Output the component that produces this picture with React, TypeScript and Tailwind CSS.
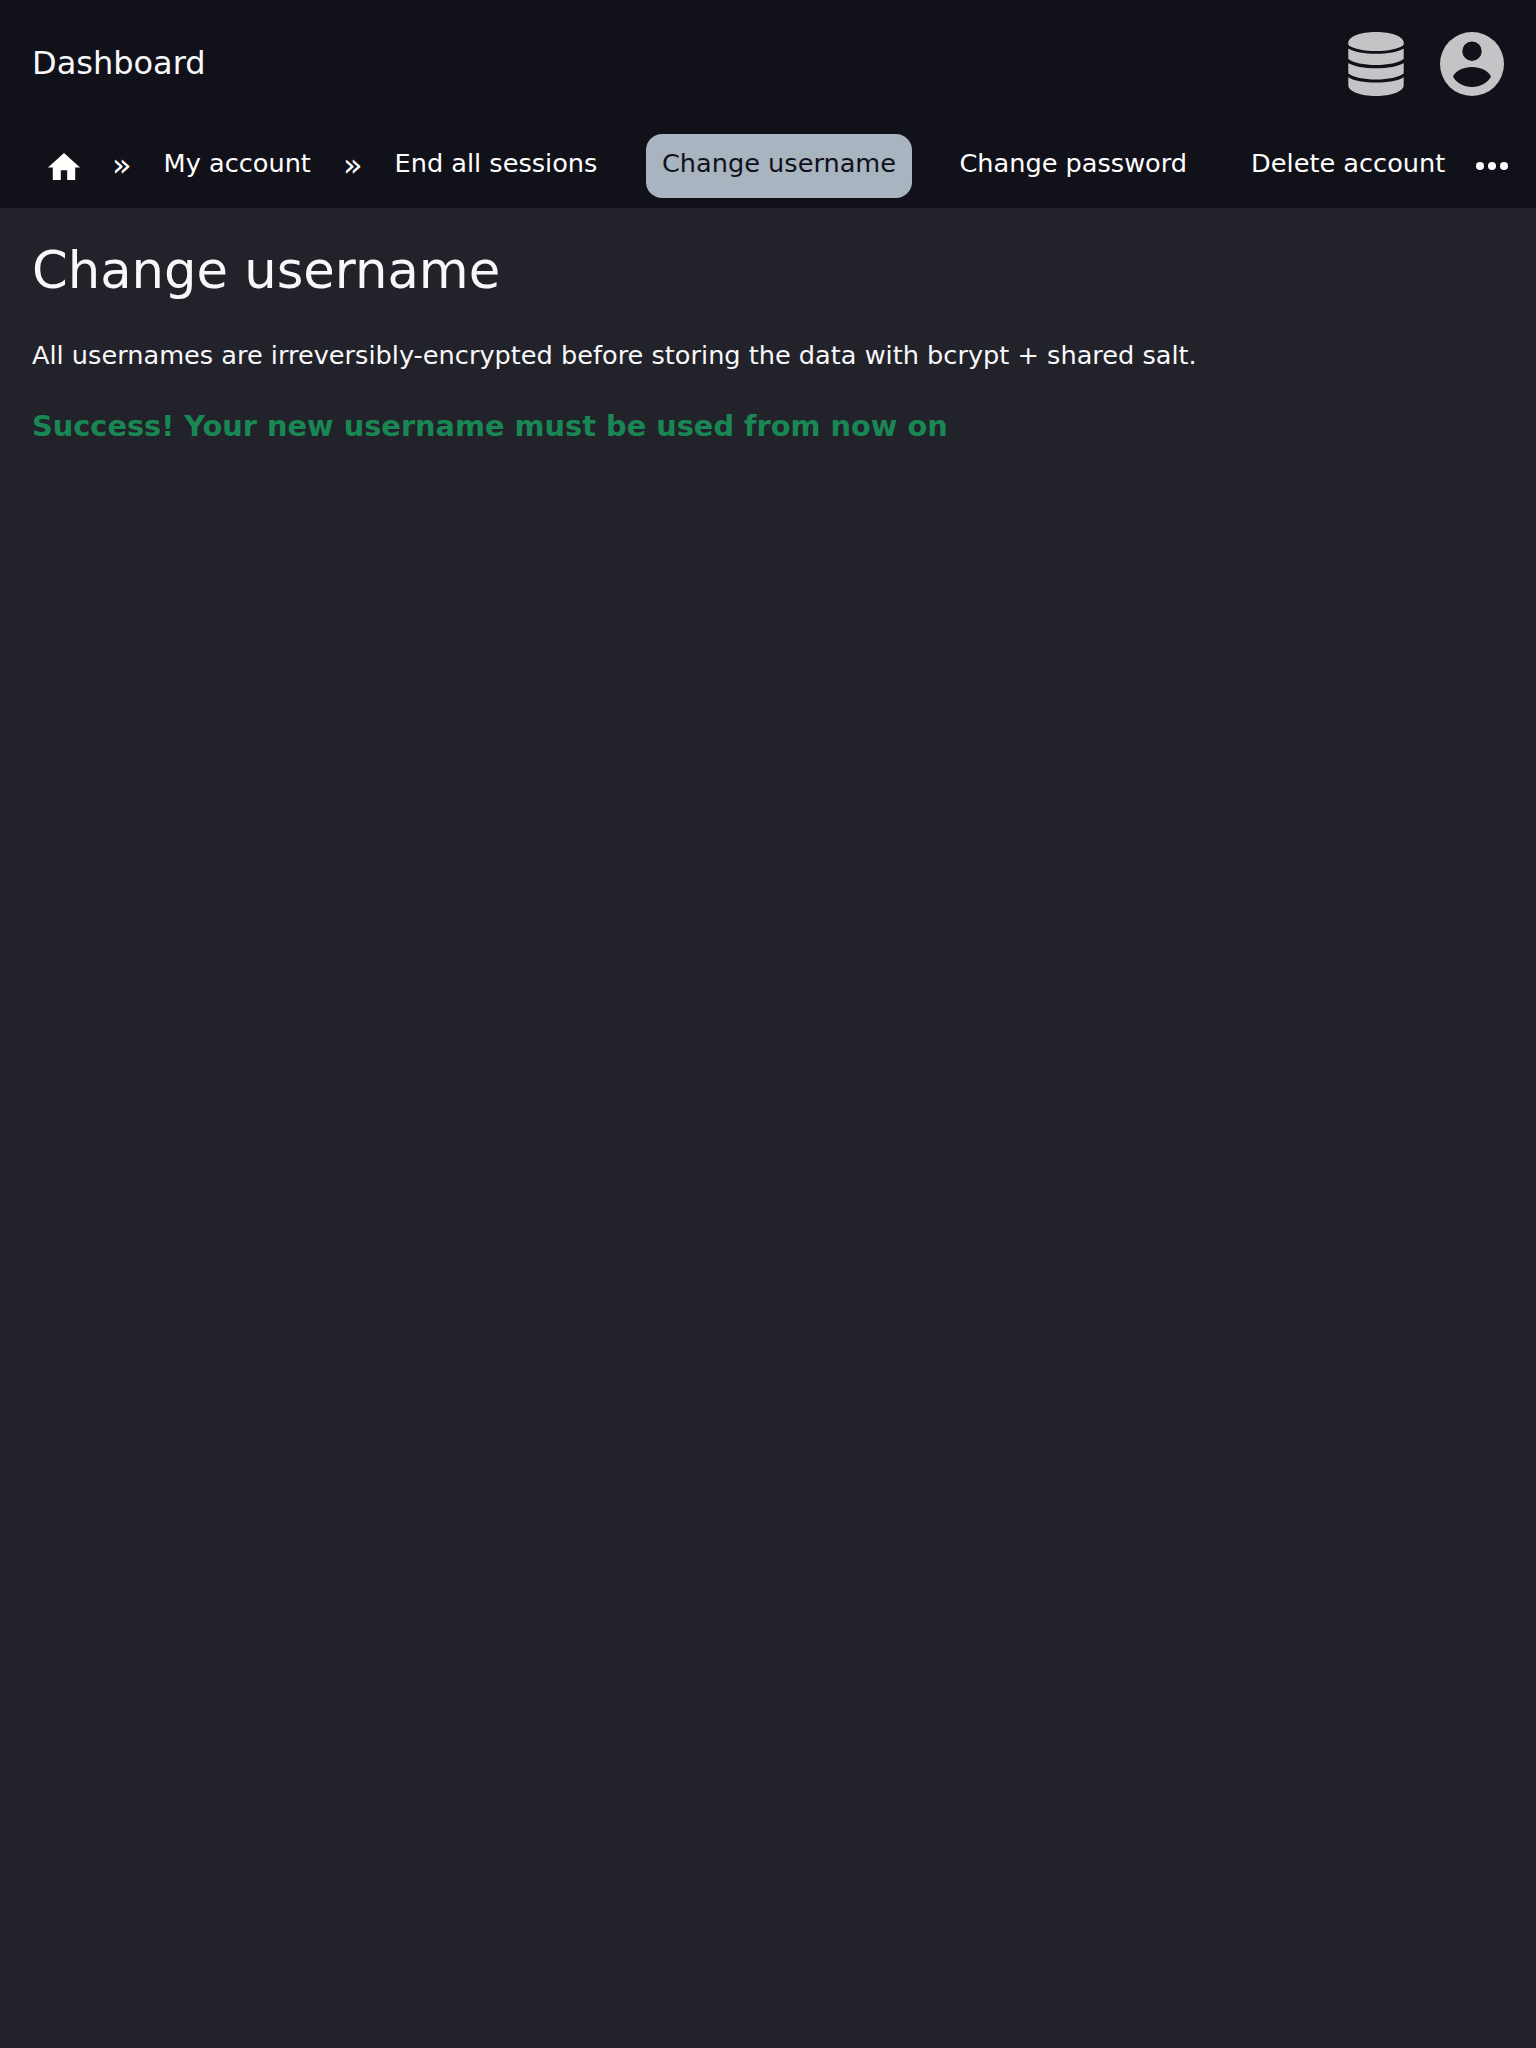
import React from "react";

const crumb = "flex h-16 shrink-0 items-center rounded-2xl px-4 pb-1 text-[25.6px] leading-none whitespace-nowrap";

function DatabaseIcon() {
  return (
    <svg className="h-16 w-14" viewBox="0 0 56 64" fill="#c4c4c6">
      <path d="M0.300 10.700C0.300 4.500 12.500 0 28 0s27.700 4.500 27.700 10.700C55.700 12.500 55.700 12.800 55 13.500C50 17 40 19 28 19S6 17 1 13.500C0.300 12.800 0.300 12.500 0.300 10.700z" />
      <path d="M0.300 16.500C6 20 16 21.800 28 21.800S50 20 55.700 16.500V27C51 30.700 40 33 28 33S5 30.700 0.300 27z" />
      <path d="M0.300 31C6 34.500 16 36.300 28 36.300S50 34.500 55.700 31V41.500C51 45.200 40 47.500 28 47.500S5 45.200 0.300 41.500z" />
      <path d="M0.300 45.300C6 49 16 50.600 28 50.600S50 49 55.700 45.300V53.300C55.700 59.500 43.500 64 28 64S0.300 59.500 0.300 53.300z" />
    </svg>
  );
}

function AccountIcon() {
  return (
    <svg className="size-16" viewBox="0 0 64 64" fill="#c4c4c6" fillRule="evenodd">
      <path d="M32 0a32 32 0 1 1 0 64a32 32 0 1 1 0-64zM32 9.500a9.700 9.700 0 1 0 0 19.400a9.700 9.700 0 1 0 0-19.400zM13 44.500C16 50.500 23.500 55 32 55S48 50.500 51 44.500C48 38.500 40.500 35 32 35S16 38.500 13 44.500z" />
    </svg>
  );
}

function Separator() {
  return <span className="flex h-16 items-center px-4 pb-0.5 text-[32px] leading-none">»</span>;
}

export default function App() {
  return (
    <div className="min-h-[2048px] w-[1536px] bg-[#22222a] font-['DejaVu_Sans',sans-serif] text-[#f8f8fa]">
      <header className="h-[208px] bg-[#11111a]">
        <div className="flex h-32 items-center justify-between px-8">
          <span className="pb-0.5 text-[32px] leading-none">Dashboard</span>
          <div className="flex gap-9">
            <DatabaseIcon />
            <AccountIcon />
          </div>
        </div>
        <nav className="flex pt-1.5 pl-8 text-white">
          <a className="flex h-16 w-16 items-center justify-center">
            <svg className="h-[27px] w-8" viewBox="0 0 32 27" fill="#fff">
              <path d="M16 0 32 14.400H27.200V27H19.200V17.300H12.800V27H4.800V14.400H0z" />
            </svg>
          </a>
          <Separator />
          <a className={crumb}>My account</a>
          <Separator />
          <a className={crumb}>End all sessions</a>
          <a className={crumb + " ml-[32.6px] bg-[#a8b4c0] text-[#11111a]"}>Change username</a>
          <a className={crumb + " ml-[31.4px]"}>Change password</a>
          <a className={crumb + " ml-8"}>Delete account</a>
          <svg className="ml-[15px] h-16 w-8 shrink-0" viewBox="0 0 32 64" fill="#fff">
            <circle cx="4" cy="32" r="4" />
            <circle cx="16" cy="32" r="4" />
            <circle cx="28" cy="32" r="4" />
          </svg>
        </nav>
      </header>
      <main className="px-8 pt-8">
        <h1 className="text-[51.200px] leading-[60px]">Change username</h1>
        <p className="mt-10 text-[25.600px] leading-[30px]">
          All usernames are irreversibly-encrypted before storing the data with bcrypt + shared salt.
        </p>
        <p className="mt-[39px] text-[28.800px] leading-[34px] font-bold text-[#198754]">
          Success! Your new username must be used from now on
        </p>
      </main>
    </div>
  );
}
